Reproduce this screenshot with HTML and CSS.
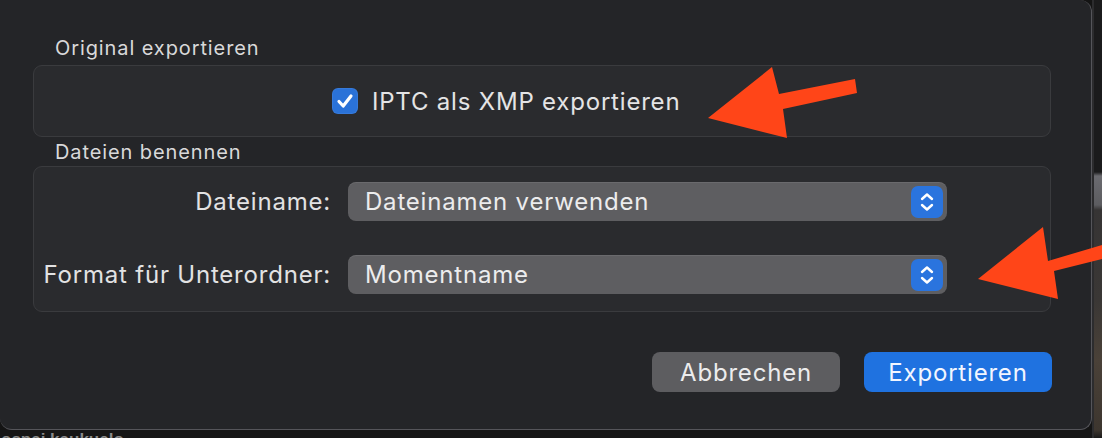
FILE: index.html
```html
<!DOCTYPE html>
<html lang="de">
<head>
<meta charset="utf-8">
<title>Export</title>
<link rel="stylesheet" href="styles.css">
</head>
<body>
<div class="screen">
  <div class="dialog">
    <div class="section-label">Original exportieren</div>
    <div class="group group-check">
      <label class="check">
        <span class="checkbox">
          <svg viewBox="0 0 26 26" width="26" height="26"><path d="M7 13.5 L11.2 18 L19 8" fill="none" stroke="#fff" stroke-width="3.2" stroke-linecap="round" stroke-linejoin="round"/></svg>
        </span>
        <span class="check-text">IPTC als XMP exportieren</span>
      </label>
    </div>
    <div class="section-label second">Dateien benennen</div>
    <div class="group group-form">
      <div class="field-label">Dateiname:</div>
      <div class="popup">
        <span class="popup-text">Dateinamen verwenden</span>
        <span class="stepper">
          <svg viewBox="0 0 32 32" width="32" height="32"><path d="M11 13 L16 8.5 L21 13 M11 19 L16 23.5 L21 19" fill="none" stroke="#fff" stroke-width="2.4" stroke-linecap="round" stroke-linejoin="round"/></svg>
        </span>
      </div>
      <div class="field-label">Format für Unterordner:</div>
      <div class="popup">
        <span class="popup-text">Momentname</span>
        <span class="stepper">
          <svg viewBox="0 0 32 32" width="32" height="32"><path d="M11 13 L16 8.5 L21 13 M11 19 L16 23.5 L21 19" fill="none" stroke="#fff" stroke-width="2.4" stroke-linecap="round" stroke-linejoin="round"/></svg>
        </span>
      </div>
    </div>
    <div class="actions">
      <button class="btn btn-secondary">Abbrechen</button>
      <button class="btn btn-primary">Exportieren</button>
    </div>
  </div>
  <div class="side"></div>
  <div class="under"><span class="under-text">ospai kaukuelo</span></div>
  <svg class="annotations" viewBox="0 0 1102 438" width="1102" height="438">
    <polygon fill="#ff4518" points="708,118 772,67 779,94 855,79 857,93 783,109 787,138"/>
    <polygon fill="#ff4518" points="978,279 1043,227 1048,261 1102,245 1102,259 1054,271 1058,299"/>
  </svg>
</div>
</body>
</html>
```

FILE: styles.css
```css
* { box-sizing: border-box; }

html, body {
  margin: 0;
  padding: 0;
}

body {
  width: 1102px;
  height: 438px;
  overflow: hidden;
  background: #141414;
  font-family: Inter, "Noto Sans", "Liberation Sans", sans-serif;
  color: #e2e2e3;
}

.screen {
  position: relative;
  width: 1102px;
  height: 438px;
  display: grid;
  grid-template-columns: 1092px 10px;
  grid-template-rows: 430px 8px;
}

.dialog {
  grid-column: 1;
  grid-row: 1;
  background: #242528;
  border: 1px solid #55555a;
  border-top: none;
  border-left: none;
  border-radius: 0 12px 12px 12px;
  padding: 37px 40px 0 33px;
  display: flex;
  flex-direction: column;
}

.section-label {
  height: 22px;
  line-height: 22px;
  font-size: 20px;
  letter-spacing: 0.9px;
  color: #d9d9da;
  margin: 0 0 6px 22px;
}

.section-label.second {
  margin-top: 4px;
  margin-bottom: 3px;
}

.group {
  background: #2a2b2e;
  border: 1px solid #3a3b3e;
  border-radius: 9px;
}

.group-check {
  height: 72px;
  display: flex;
  align-items: center;
  padding-left: 298px;
}

.check {
  display: flex;
  align-items: center;
  gap: 14px;
}

.checkbox {
  width: 26px;
  height: 26px;
  border-radius: 6px;
  background: #2a72d8;
  display: flex;
  align-items: center;
  justify-content: center;
  box-shadow: inset 0 0 0 1px rgba(255,255,255,0.06);
}

.check-text,
.field-label,
.popup-text,
.btn {
  font-size: 24px;
  letter-spacing: 0.8px;
}

.check-text {
  color: #e4e4e5;
}

.group-form {
  display: grid;
  grid-template-columns: 295px 599px;
  column-gap: 17px;
  row-gap: 34px;
  align-items: center;
  padding: 15px 0 17px 2px;
}

.field-label {
  text-align: right;
  white-space: nowrap;
  color: #e2e2e3;
}

.popup {
  height: 39px;
  border-radius: 8px;
  background: #5e5e61;
  box-shadow: inset 0 1px 0 rgba(255,255,255,0.08);
  display: flex;
  align-items: center;
  justify-content: space-between;
  padding: 0 4px 0 17px;
}

.popup-text {
  color: #ececed;
}

.stepper {
  width: 32px;
  height: 32px;
  border-radius: 7px;
  background: #2a74de;
  display: flex;
}

.actions {
  display: flex;
  justify-content: flex-end;
  gap: 24px;
  margin-top: 40px;
  margin-right: -1px;
}

.btn {
  width: 188px;
  height: 40px;
  border: none;
  border-radius: 8px;
  font-family: inherit;
  color: #ececed;
  padding: 0;
}

.btn-secondary {
  background: #5d5d60;
}

.btn-primary {
  background: #1f72e0;
  color: #f2f6ff;
}

.side {
  grid-column: 2;
  grid-row: 1 / span 2;
  background: linear-gradient(to bottom, #1b1b1c 0, #1b1b1c 172px, #6b6b70 176px, #5c5c60 205px, #363434 210px, #3a3735 300px, #4a4138 360px, #3d362f 430px, #1a1a1a 438px);
  border-left: 2px solid #2c2c2e;
}

.under {
  grid-column: 1;
  grid-row: 2;
  background: #161616;
  overflow: hidden;
  position: relative;
}

.under-text {
  display: block;
  font-family: "Liberation Sans", sans-serif;
  font-weight: bold;
  font-size: 17px;
  line-height: 17px;
  color: #8a8a8a;
  padding-left: 1px;
  margin-top: 1px;
}

.annotations {
  position: absolute;
  left: 0;
  top: 0;
  pointer-events: none;
}
```
